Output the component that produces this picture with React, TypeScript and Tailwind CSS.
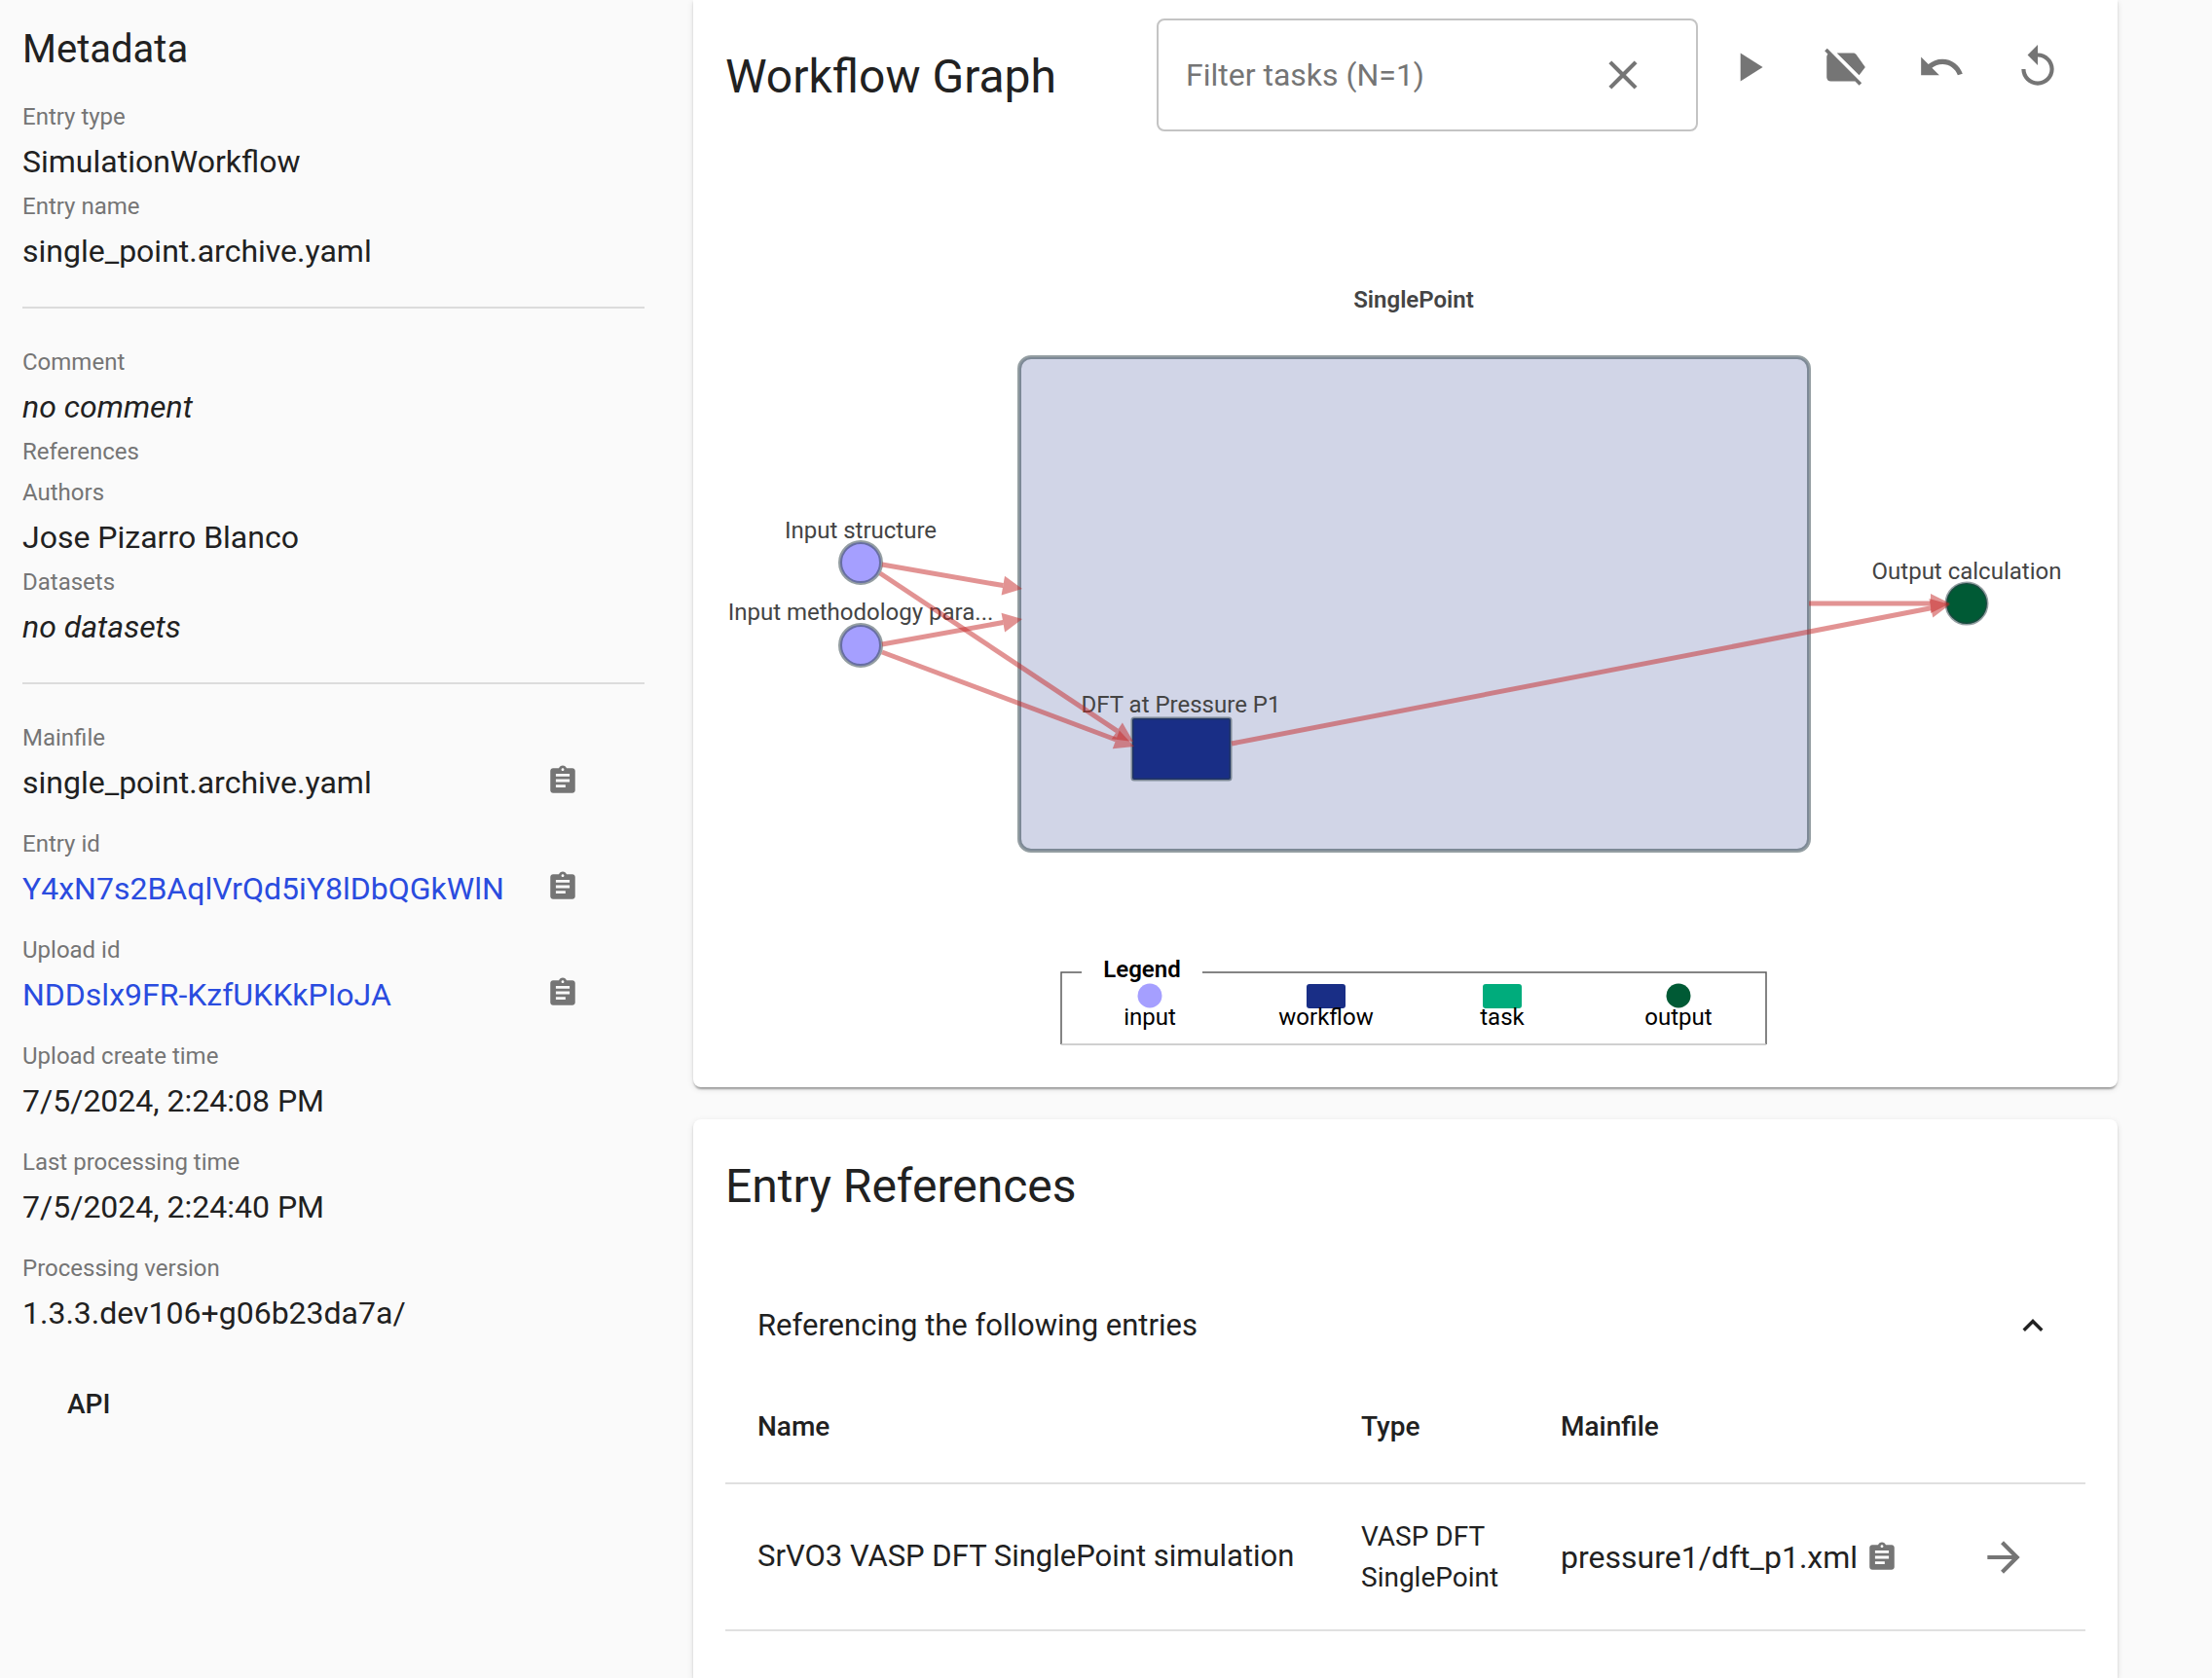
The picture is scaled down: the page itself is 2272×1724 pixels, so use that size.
import React from 'react'
import {
  MdArrowForward,
  MdAssignment,
  MdClose,
  MdExpandLess,
  MdLabelOff,
  MdPlayArrow,
  MdReplay,
  MdUndo,
} from 'react-icons/md'

type FieldProps = {
  label: string
  value?: string
  italic?: boolean
  link?: boolean
  copy?: boolean
}

function Field({ label, value, italic, link, copy }: FieldProps) {
  return (
    <div>
      <dt className="text-[24px] leading-[42px] text-[#757575]">{label}</dt>
      {value && (
        <dd className="flex w-[572px] items-center justify-between text-[32px] leading-[50px]">
          {link ? (
            <a href="#" className="text-[#2a4cdf]">
              {value}
            </a>
          ) : (
            <span className={italic ? 'italic' : ''}>{value}</span>
          )}
          {copy && (
            <button type="button" aria-label={`Copy ${label}`} className="mb-1 text-[#757575]">
              <MdAssignment size={34} />
            </button>
          )}
        </dd>
      )}
    </div>
  )
}

function Metadata() {
  return (
    <aside className="w-[712px] shrink-0 pt-[23px] pr-[50px] pl-[23px]">
      <h2 className="mb-[20px] text-[40px] leading-[56px]">Metadata</h2>
      <dl>
        <Field label="Entry type" value="SimulationWorkflow" />
        <Field label="Entry name" value="single_point.archive.yaml" />
      </dl>
      <hr className="mt-[32px] mb-[34px] border-t-2 border-[#dcdcdc]" />
      <dl>
        <Field label="Comment" value="no comment" italic />
        <Field label="References" />
        <Field label="Authors" value="Jose Pizarro Blanco" />
        <Field label="Datasets" value="no datasets" italic />
      </dl>
      <hr className="mt-[32px] mb-[34px] border-t-2 border-[#dcdcdc]" />
      <dl className="flex flex-col gap-[17px]">
        <Field label="Mainfile" value="single_point.archive.yaml" copy />
        <Field label="Entry id" value="Y4xN7s2BAqlVrQd5iY8lDbQGkWlN" link copy />
        <Field label="Upload id" value="NDDslx9FR-KzfUKKkPIoJA" link copy />
        <Field label="Upload create time" value="7/5/2024, 2:24:08 PM" />
        <Field label="Last processing time" value="7/5/2024, 2:24:40 PM" />
        <Field label="Processing version" value="1.3.3.dev106+g06b23da7a/" />
      </dl>
      <button type="button" className="mt-[31px] px-[46px] py-[17px] text-[28px] leading-[42px] font-medium">
        API
      </button>
    </aside>
  )
}

function IconButton({ label, children }: { label: string; children: React.ReactNode }) {
  return (
    <button type="button" aria-label={label} className="py-[25px] pr-[24px] pl-[25px] text-[#757575]">
      {children}
    </button>
  )
}

// Each edge runs from its source border to the tip of the arrow head.
const edges = [
  { from: [906, 580], to: [1050, 605] },
  { from: [906, 662], to: [1050, 636] },
  { from: [904, 589], to: [1164, 762] },
  { from: [906, 670], to: [1165, 767] },
  { from: [1265, 764], to: [2003, 621] },
  { from: [1858, 620], to: [2003, 620] },
]

function Edge({ from, to }: { from: number[]; to: number[] }) {
  const dx = to[0] - from[0]
  const dy = to[1] - from[1]
  const length = Math.hypot(dx, dy)
  const angle = (Math.atan2(dy, dx) * 180) / Math.PI
  return (
    <g transform={`translate(${from[0]} ${from[1]}) rotate(${angle})`} fill="#c62828" fillOpacity="0.5">
      <rect x="0" y="-2.5" width={length - 20} height="5" />
      <path d={`M${length - 20} -10 L${length} 0 L${length - 20} 10 Z`} />
    </g>
  )
}

function Graph() {
  return (
    <svg viewBox="745 141 1397 943" className="block h-auto w-full" role="img" aria-label="Workflow graph">
      <g stroke="#293d45" strokeOpacity="0.5">
        <rect x="1047" y="367" width="811" height="507" rx="12" fill="#192e86" fillOpacity="0.2" strokeWidth="4" />
        <circle cx="884" cy="578" r="21" fill="#a59fff" strokeWidth="4" />
        <circle cx="884" cy="663" r="21" fill="#a59fff" strokeWidth="4" />
        <rect x="1163" y="738" width="101" height="63" rx="2" fill="#192e86" strokeWidth="3" />
        <circle cx="2020" cy="620" r="21" fill="#005a35" strokeWidth="3" />
      </g>
      <g fill="#444444" fontSize="24" textAnchor="middle">
        <text x="1452" y="316" fontWeight="600">SinglePoint</text>
        <text x="884" y="553">Input structure</text>
        <text x="884" y="637">Input methodology para...</text>
        <text x="1213" y="732">DFT at Pressure P1</text>
        <text x="2020" y="595">Output calculation</text>
      </g>
      {edges.map((edge, i) => (
        <Edge key={i} from={edge.from} to={edge.to} />
      ))}
      <path d="M1111 999 H1090 V1073 M1235 999 H1814 V1073" fill="none" stroke="#5c5c5c" strokeWidth="1.5" />
      <path d="M1090 1073 H1814" stroke="#c0c0c0" strokeWidth="1.5" />
      <circle cx="1181" cy="1023" r="12.5" fill="#a59fff" />
      <rect x="1342" y="1011" width="40" height="25" rx="3" fill="#192e86" />
      <rect x="1523" y="1011" width="40" height="25" rx="3" fill="#00ac7c" />
      <circle cx="1724" cy="1023" r="12.5" fill="#005a35" />
      <g fill="#000000" fontSize="24" textAnchor="middle">
        <text x="1173" y="1004" fontWeight="600">Legend</text>
        <text x="1181" y="1053">input</text>
        <text x="1362" y="1053">workflow</text>
        <text x="1543" y="1053">task</text>
        <text x="1724" y="1053">output</text>
      </g>
    </svg>
  )
}

const cardShadow =
  'bg-white shadow-[0_4px_2px_-2px_rgba(0,0,0,0.2),0_2px_2px_rgba(0,0,0,0.14),0_2px_6px_rgba(0,0,0,0.12)]'

function WorkflowCard() {
  return (
    <section className={`rounded-b-lg px-[33px] pt-[19px] pb-[33px] ${cardShadow}`}>
      <div className="mb-[6px] flex items-center">
        <h2 className="flex-1 pt-1 text-[48px] leading-[56px]">Workflow Graph</h2>
        <div className="mr-0.5 flex h-[116px] w-[556px] items-center rounded-lg border-2 border-[#c4c4c4] pr-[50px] pl-[28px]">
          <input
            type="text"
            aria-label="Filter tasks"
            placeholder="Filter tasks (N=1)"
            className="min-w-0 flex-1 text-[32px] outline-none placeholder:text-[#757575]"
          />
          <button type="button" aria-label="Clear filter" className="text-[#757575]">
            <MdClose size={50} />
          </button>
        </div>
        <div className="flex self-start">
          <IconButton label="Play">
            <MdPlayArrow size={50} />
          </IconButton>
          <IconButton label="Hide labels">
            <MdLabelOff size={50} />
          </IconButton>
          <IconButton label="Undo">
            <MdUndo size={50} />
          </IconButton>
          <IconButton label="Reset">
            <MdReplay size={50} />
          </IconButton>
        </div>
      </div>
      <Graph />
    </section>
  )
}

function ReferencesCard() {
  return (
    <section className={`flex-1 rounded-t-lg px-[33px] pt-[39px] ${cardShadow}`}>
      <h2 className="text-[48px] leading-[60px]">Entry References</h2>
      <button
        type="button"
        aria-expanded="true"
        className="mt-[68px] mb-[1px] flex w-full items-center justify-between px-[33px] text-[31px] leading-[90px]"
      >
        <span>Referencing the following entries</span>
        <MdExpandLess size={42} />
      </button>
      <table className="w-full table-fixed border-collapse text-left">
        <colgroup>
          <col />
          <col className="w-[205px]" />
          <col className="w-[430px]" />
          <col className="w-[142px]" />
        </colgroup>
        <thead>
          <tr className="h-[116px] border-b-2 border-[#e0e0e0] text-[28px]">
            <th className="px-[33px] font-medium">Name</th>
            <th className="px-[33px] font-medium">Type</th>
            <th className="px-[33px] font-medium">Mainfile</th>
            <th aria-label="Actions" />
          </tr>
        </thead>
        <tbody>
          <tr className="h-[151px] border-b-2 border-[#e0e0e0] text-[32px]">
            <td className="pl-[33px] text-[31px]">SrVO3 VASP DFT SinglePoint simulation</td>
            <td className="pr-[16px] pl-[33px] text-[28px] leading-[42px]">VASP DFT SinglePoint</td>
            <td className="pl-[33px]">
              <div className="flex items-center gap-2">
                <span>pressure1/dft_p1.xml</span>
                <button type="button" aria-label="Copy mainfile" className="text-[#757575]">
                  <MdAssignment size={34} />
                </button>
              </div>
            </td>
            <td className="pl-[33px]">
              <button type="button" aria-label="Open entry" className="block text-[#757575]">
                <MdArrowForward size={50} />
              </button>
            </td>
          </tr>
        </tbody>
      </table>
    </section>
  )
}

export default function App() {
  return (
    <div className="flex min-h-screen bg-[#fafafa] font-[Roboto,sans-serif] text-[#212121]">
      <Metadata />
      <main className="mr-[97px] flex min-w-0 flex-1 flex-col gap-[33px]">
        <WorkflowCard />
        <ReferencesCard />
      </main>
    </div>
  )
}
